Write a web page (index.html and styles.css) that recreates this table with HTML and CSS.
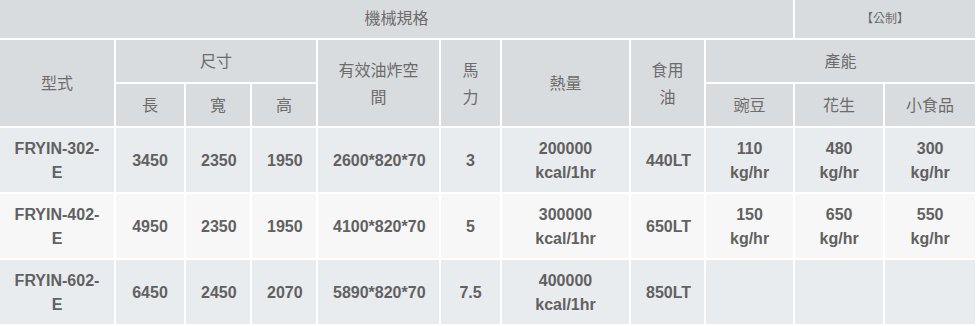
FILE: index.html
```html
<!DOCTYPE html>
<html lang="zh-Hant">
<head>
<meta charset="utf-8">
<link rel="stylesheet" href="styles.css">
</head>
<body>
<table class="spec">
  <colgroup>
    <col class="c-model"><col class="c-len"><col class="c-wid"><col class="c-hei">
    <col class="c-space"><col class="c-hp"><col class="c-heat"><col class="c-oil">
    <col class="c-pea"><col class="c-nut"><col class="c-snack">
  </colgroup>
  <thead>
    <tr class="top">
      <th colspan="9">機械規格</th>
      <th colspan="2" class="unit">【公制】</th>
    </tr>
    <tr>
      <th rowspan="2">型式</th>
      <th colspan="3">尺寸</th>
      <th rowspan="2">有效油炸空間</th>
      <th rowspan="2">馬力</th>
      <th rowspan="2">熱量</th>
      <th rowspan="2">食用油</th>
      <th colspan="3">產能</th>
    </tr>
    <tr>
      <th>長</th><th>寬</th><th>高</th>
      <th>豌豆</th><th>花生</th><th>小食品</th>
    </tr>
  </thead>
  <tbody>
    <tr class="odd">
      <td class="model">FRYIN-302-E</td><td>3450</td><td>2350</td><td>1950</td><td>2600*820*70</td><td>3</td>
      <td>200000 kcal/1hr</td><td>440LT</td><td>110 kg/hr</td><td>480 kg/hr</td><td>300 kg/hr</td>
    </tr>
    <tr class="even">
      <td class="model">FRYIN-402-E</td><td>4950</td><td>2350</td><td>1950</td><td>4100*820*70</td><td>5</td>
      <td>300000 kcal/1hr</td><td>650LT</td><td>150 kg/hr</td><td>650 kg/hr</td><td>550 kg/hr</td>
    </tr>
    <tr class="odd">
      <td class="model">FRYIN-602-E</td><td>6450</td><td>2450</td><td>2070</td><td>5890*820*70</td><td>7.5</td>
      <td>400000 kcal/1hr</td><td>850LT</td><td></td><td></td><td></td>
    </tr>
  </tbody>
</table>
</body>
</html>
```

FILE: styles.css
```css
html, body {
  margin: 0;
  padding: 0;
  background: #ffffff;
}

.spec {
  width: 977px;
  table-layout: fixed;
  border-collapse: separate;
  border-spacing: 0;
  color: #666666;
}

.c-model { width: 116px; }
.c-len { width: 70px; }
.c-wid { width: 66px; }
.c-hei { width: 66px; }
.c-space { width: 123px; }
.c-hp { width: 61px; }
.c-heat { width: 129px; }
.c-oil { width: 75px; }
.c-pea { width: 89px; }
.c-nut { width: 90px; }
.c-snack { width: 92px; }

.spec th,
.spec td {
  border-right: 2px solid #ffffff;
  border-bottom: 2px solid #ffffff;
  text-align: center;
  vertical-align: middle;
  padding: 8px 15px;
}

.spec th {
  background: #d9dcdf;
  font-family: "Noto Sans CJK TC", "Noto Sans CJK SC", sans-serif;
  font-weight: 400;
  font-size: 16px;
  line-height: 27px;
  padding-top: 7px;
  padding-bottom: 8px;
  color: #6c6c6c;
}

.spec .top th {
  padding-top: 4px;
  padding-bottom: 7px;
}

.spec th.unit {
  font-size: 12px;
}

.spec td {
  font-family: "Liberation Sans", Arial, sans-serif;
  font-weight: 700;
  font-size: 16px;
  line-height: 24px;
  padding-top: 9px;
  padding-bottom: 7px;
  color: #616161;
}

.spec td.model {
  padding-left: 12px;
  padding-right: 12px;
}

.spec .odd td {
  background: #e9ecef;
}

.spec .even td {
  background: #f7f7f7;
}
```
